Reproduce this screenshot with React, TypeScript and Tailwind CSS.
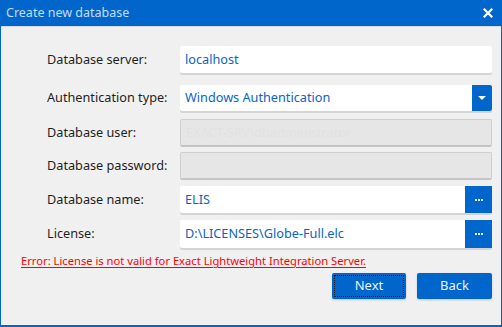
import { type ReactNode } from 'react'

const font = { fontFamily: '"Noto Sans", "Open Sans", sans-serif' }

function Label({ children }: { children: ReactNode }) {
    return <div className="w-[179px] shrink-0 pl-[46px] whitespace-nowrap text-[12.7px] text-[#1e1e1e]">{children}</div>
}

function TextField({ value, button }: { value: string; button?: ReactNode }) {
    return (
        <div className="flex flex-1 h-[27px] bg-white rounded-[2px] shadow-[0_2px_0_#d4d4d4]">
            <div className="flex-1 flex items-center pl-[5px] text-[12.7px] text-[#0a64c4]">{value}</div>
            {button}
        </div>
    )
}

function DisabledField({ hint }: { hint?: string }) {
    return (
        <div className="flex-1 h-[28px] bg-[#e6e6e6] border border-[#cfcfcf] border-b-2 border-b-[#c4c4c4] rounded-[2px] flex items-center pl-[5px] text-[12.7px] text-[#e2e2e2]">
            {hint}
        </div>
    )
}

function EllipsisButton() {
    return (
        <div className="w-[27px] bg-[#0066cc] flex items-center justify-center">
            <div className="flex gap-[1px]">
                <span className="w-[2px] h-[2px] bg-white/90" />
                <span className="w-[2px] h-[2px] bg-white/90" />
                <span className="w-[2px] h-[2px] bg-white/90" />
            </div>
        </div>
    )
}

export default function App() {
    return (
        <div className="w-[502px] h-[327px] bg-[#0066cc] p-[0_1px_2px_1px] flex flex-col overflow-hidden" style={font}>
            {/* title bar */}
            <div className="h-[26px] shrink-0 flex items-center justify-between pl-[5px] pr-[8px]">
                <span className="text-[12.5px] text-[#c6dcf5]">Create new database</span>
                <svg width="10" height="10" viewBox="0 0 10 10">
                    <path d="M1.5 1.5 L8.5 8.5 M8.5 1.5 L1.5 8.5" stroke="white" strokeWidth="2.2" strokeLinecap="square" />
                </svg>
            </div>

            {/* body */}
            <div className="flex-1 bg-[#f0f0f0] border-t border-[#dadada] pr-[9px] flex flex-col">
                <div className="flex items-center mt-[19px]">
                    <Label>Database server:</Label>
                    <TextField value="localhost" />
                </div>
                <div className="flex items-center mt-[12px]">
                    <Label>Authentication type:</Label>
                    <div className="flex flex-1 h-[26px] bg-white rounded-[2px] shadow-[0_2px_0_#d4d4d4]">
                        <div className="flex-1 flex items-center pl-[5px] text-[12.7px] text-[#0a64c4]">Windows Authentication</div>
                        <div className="w-[20px] bg-[#0066cc] flex items-center justify-center rounded-r-[2px]">
                            <svg width="8" height="4" viewBox="0 0 8 4">
                                <path d="M0 0 H8 L4 4 Z" fill="white" />
                            </svg>
                        </div>
                    </div>
                </div>
                <div className="flex items-center mt-[8px]">
                    <Label>Database user:</Label>
                    <DisabledField hint="EXACT-SRV\dbadministrator" />
                </div>
                <div className="flex items-center mt-[5px]">
                    <Label>Database password:</Label>
                    <DisabledField />
                </div>
                <div className="flex items-center mt-[6px]">
                    <Label>Database name:</Label>
                    <TextField value="ELIS" button={<EllipsisButton />} />
                </div>
                <div className="flex items-center mt-[7px]">
                    <Label>License:</Label>
                    <div className="flex flex-1 h-[28px] bg-white rounded-[2px] shadow-[0_2px_0_#d4d4d4]">
                        <div className="flex-1 flex items-center pl-[5px] text-[12.7px] text-[#0a64c4]">D:\LICENSES\Globe-Full.elc</div>
                        <EllipsisButton />
                    </div>
                </div>

                <div className="mt-[4px] pl-[20px] text-[11.2px] text-[#ff0000] underline underline-offset-2 leading-[18px] whitespace-nowrap">
                    Error: License is not valid for Exact Lightweight Integration Server.
                </div>

                <div className="flex justify-end gap-[11px] mt-[3px]">
                    <button className="w-[74px] h-[26px] bg-[#0066cc] rounded-[2px] shadow-[0_1px_2px_#b8c8dc] p-[2px]">
                        <div className="w-full h-full border border-dotted border-[#0a1a30] flex items-center justify-center text-[13px] text-white/95">Next</div>
                    </button>
                    <button className="w-[75px] h-[26px] bg-[#0066cc] rounded-[2px] shadow-[0_1px_2px_#b8c8dc] flex items-center justify-center text-[13px] text-white/95">
                        Back
                    </button>
                </div>
            </div>
        </div>
    )
}
